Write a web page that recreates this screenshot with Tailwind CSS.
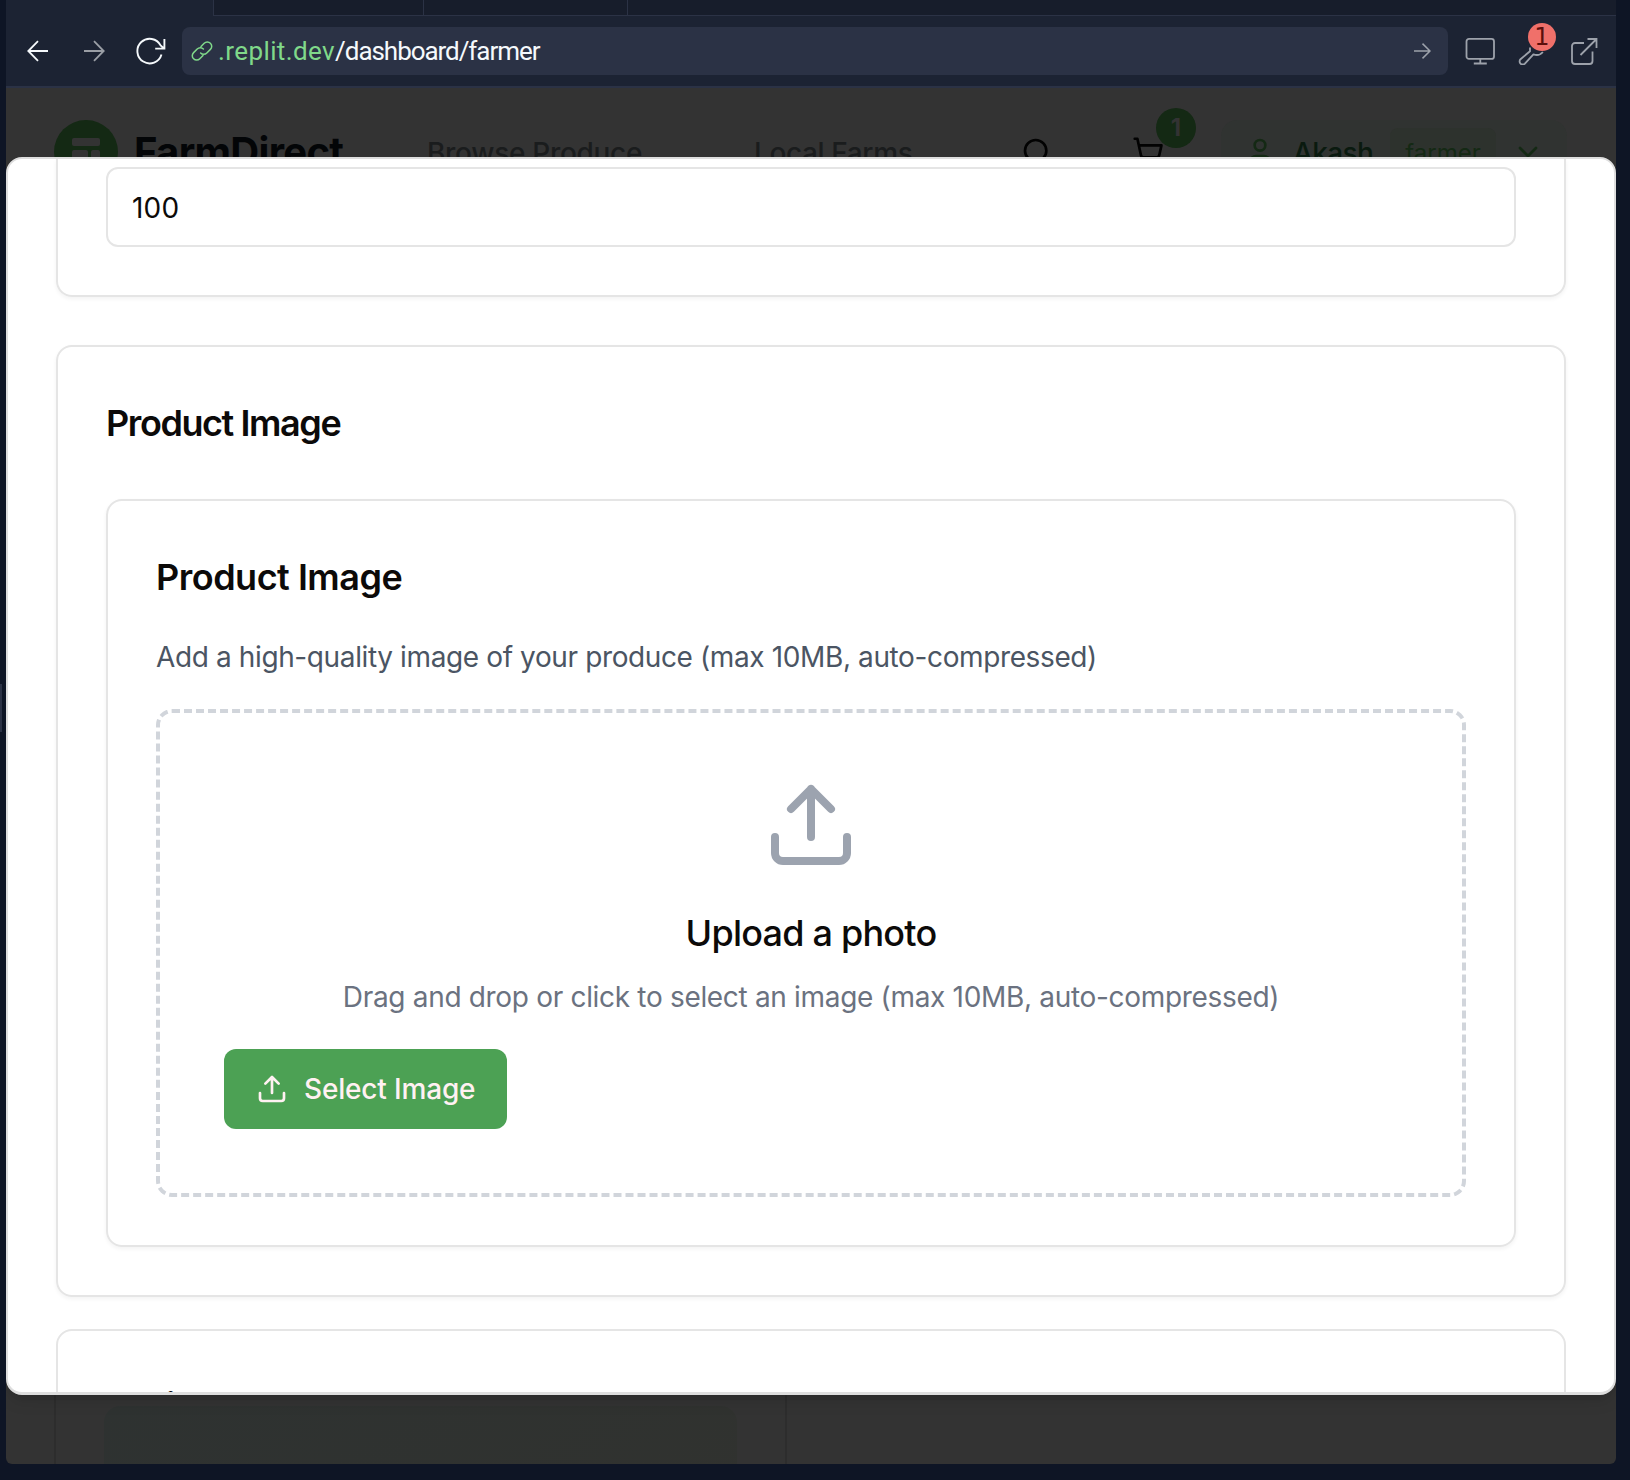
<!DOCTYPE html>
<html lang="en">
<head>
<meta charset="utf-8">
<title>FarmDirect</title>
<script src="https://cdn.jsdelivr.net/npm/@tailwindcss/browser@4"></script>
</head>
<body class="relative h-[1480px] w-[1630px] overflow-hidden bg-[#0e1525] pl-[6px] pr-[14px] font-['Inter',sans-serif] text-[28px] text-[#0c0a09]">
  <div class="absolute left-0 top-[684px] h-12 w-[2px] bg-[#2b3245]"></div>

  <!-- Tab strip -->
  <div class="flex h-4 bg-[#1c2333]">
    <div class="w-[207px]"></div>
    <div class="w-[210px] border-b border-l border-[#2b3245] bg-[#171d2b]"></div>
    <div class="w-[204px] border-b border-l border-[#2b3245] bg-[#171d2b]"></div>
    <div class="flex-1 border-b border-l border-[#2b3245] bg-[#171d2b]"></div>
  </div>

  <!-- Browser toolbar -->
  <div class="flex h-[72px] items-start border-b-2 border-[#2b3245] bg-[#1c2333] pt-[11px]">
    <div class="flex h-12 w-[176px] items-center">
      <svg class="ml-[21px] h-[22px] w-[22px]" viewBox="0 0 22 22" fill="none" stroke="#f5f9fc" stroke-width="1.8"><path d="M21 11H1.5M11 1.2 1.3 11l9.7 9.8"/></svg>
      <svg class="ml-[34px] h-[22px] w-[22px]" viewBox="0 0 22 22" fill="none" stroke="#9a9ea5" stroke-width="1.8"><path d="M1 11h19.5M11 1.2l9.7 9.8-9.7 9.8"/></svg>
      <svg class="ml-[31px] h-[28px] w-[30px]" viewBox="0 0 30 28" fill="none" stroke="#f5f9fc" stroke-width="1.9"><path d="M25.500 17.500A12.300 12.300 0 1 1 24.600 8.400L27.500 11M28.400 2v9.600h-9.200"/></svg>
    </div>
    <div class="flex h-12 w-[1266px] items-center rounded-lg bg-[#2b3245] pl-[9px] pr-[17px]">
      <svg class="h-[22px] w-[22px]" viewBox="0 0 22 22" fill="none" stroke="#80d98a" stroke-width="1.5" stroke-linecap="round"><path d="M10 6.500 13.200 3.200a4.300 4.300 0 0 1 6.200 0 4.300 4.300 0 0 1 0 6.200l-3.600 3.600a4.300 4.300 0 0 1-6.200 0M12 15.500l-3.200 3.300a4.300 4.300 0 0 1-6.200 0 4.300 4.300 0 0 1 0-6.200l3.600-3.600a4.300 4.300 0 0 1 6.200 0"/></svg>
      <div class="ml-[5px] flex-1 whitespace-nowrap pt-px font-['Roboto',sans-serif] text-[26px] tracking-[-1.05px] text-[#f5f9fc]"><span class="tracking-[0.4px] text-[#80d98a]">.replit.dev</span>/dashboard/farmer</div>
      <svg class="h-[16px] w-[17px]" viewBox="0 0 17 16" fill="none" stroke="#9da2ab" stroke-width="1.5"><path d="M0 8h16M8.5.6 16 8l-7.500 7.400"/></svg>
    </div>
    <div class="flex h-12 flex-1 items-center pl-[17px]">
      <svg class="h-[28px] w-[30px]" viewBox="0 0 30 28" fill="none" stroke="#9da2ab" stroke-width="1.8"><rect x="1.500" y="1.900" width="27.500" height="20" rx="2.500"/><path d="M15.300 22v4.500M8.800 26.500h13"/></svg>
      <div class="relative ml-[23px] h-[28px] w-[28px]">
        <svg class="h-[28px] w-[28px]" viewBox="0 0 28 28" fill="none" stroke="#9da2ab" stroke-width="1.8" stroke-linejoin="round"><path d="M12 10.500v3.700L2.500 22.200a3.100 3.100 0 0 0 4.400 4.400l8.500-9.300c3 1.200 7 .6 9.500-2.300"/></svg>
        <div class="absolute left-[10px] top-[-14px] flex h-[28px] w-[28px] items-center justify-center rounded-full bg-[#f0706a] font-['DejaVu_Sans',sans-serif] text-2xl text-[#5c0e0b]">1</div>
      </div>
      <svg class="ml-[24px] h-[28px] w-[28px]" viewBox="0 0 28 28" fill="none" stroke="#9da2ab" stroke-width="1.8"><path d="M14 6H5a3 3 0 0 0-3 3v15a3 3 0 0 0 3 3h14.500a3 3 0 0 0 3-3v-9.500M10.500 18 26 2.500M17.500 2h9v9"/></svg>
    </div>
  </div>

  <!-- App viewport, dimmed behind the dialog -->
  <div class="relative h-[1376px] overflow-hidden rounded-b-md bg-[#333333]">
    <div class="flex h-32 items-center pl-12">
      <div class="flex h-16 w-16 items-center justify-center rounded-full bg-[#142914]">
        <svg class="h-10 w-10" viewBox="0 0 40 40" fill="#333"><rect x="6" y="6" width="28" height="8" rx="2"/><path d="M8 18h12a2 2 0 0 1 2 2v14H8a2 2 0 0 1-2-2V20a2 2 0 0 1 2-2zM25 20a2 2 0 0 1 2-2h5a2 2 0 0 1 2 2v12a2 2 0 0 1-2 2h-5a2 2 0 0 1-2-2z"/></svg>
      </div>
      <div class="ml-4 w-[293px] whitespace-nowrap text-[40px] font-bold tracking-[-0.7px] text-[#030507]">FarmDirect</div>
      <div class="w-[327px] whitespace-nowrap pt-px font-medium tracking-[-0.3px] text-[#1a1c1d]">Browse Produce</div>
      <div class="w-[267px] whitespace-nowrap pt-px font-medium tracking-[-0.38px] text-[#1a1c1d]">Local Farms</div>
      <svg class="h-8 w-8" viewBox="0 0 24 24" fill="none" stroke="#020202" stroke-width="2" stroke-linecap="round"><circle cx="11" cy="11" r="8"/><path d="m21 21-4.300-4.300"/></svg>
      <div class="relative ml-[79px] h-8 w-8">
        <svg class="h-8 w-8" viewBox="0 0 24 24" fill="none" stroke="#020202" stroke-width="2" stroke-linecap="round" stroke-linejoin="round"><circle cx="8" cy="21" r="1"/><circle cx="19" cy="21" r="1"/><path d="M2.050 2.050h2l2.660 12.420a2 2 0 0 0 2 1.580h9.780a2 2 0 0 0 1.950-1.570l1.650-7.430H5.120"/></svg>
        <div class="absolute left-[24px] top-[-28px] flex h-10 w-10 items-center justify-center rounded-full bg-[#142914] text-2xl font-bold text-[#333]">1</div>
      </div>
      <div class="ml-[57px] flex h-16 w-[346px] items-center rounded-2xl bg-[#303331] pl-8">
        <svg class="-ml-[9px] h-8 w-8" viewBox="0 0 24 24" fill="none" stroke="#142914" stroke-width="2" stroke-linecap="round"><circle cx="12" cy="7" r="4"/><path d="M19 21v-2a4 4 0 0 0-4-4H9a4 4 0 0 0-4 4v2"/></svg>
        <div class="ml-[17px] w-[97px] pt-px font-medium tracking-[-0.6px] text-[#0a1a0f]">Akash</div>
        <div class="flex h-12 w-[106px] items-center justify-center rounded-lg bg-[#2d322d] pt-[2px] text-2xl text-[#142914]">farmer</div>
        <svg class="ml-[16px] h-8 w-8" viewBox="0 0 24 24" fill="none" stroke="#142914" stroke-width="2" stroke-linecap="round" stroke-linejoin="round"><path d="m6 9 6 6 6-6"/></svg>
      </div>
    </div>
    <div class="mt-[1040px] flex h-[208px] pl-12">
      <div class="w-[733px] border-x-2 border-[#2d2d2d] px-12 pt-[150px]">
        <div class="h-[384px] rounded-t-2xl bg-linear-to-br from-[#2e3231] to-[#32322e]"></div>
      </div>
    </div>

    <!-- Product dialog -->
    <div class="absolute inset-x-0 top-[69px] h-[1238px] overflow-hidden rounded-2xl border-2 border-b-3 border-[#dedede] bg-white px-12 shadow-lg">
      <div class="h-[138px] rounded-b-2xl border-x-2 border-b-2 border-[#e5e5e5] px-12 pt-2 shadow-[0_2px_4px_rgba(0,0,0,0.05)]">
        <div class="flex h-20 items-center rounded-xl border-2 border-[#e5e5e5] px-6 pt-[2px] tracking-[0.2px]">100</div>
      </div>

      <div class="mt-12 rounded-2xl border-2 border-[#e5e5e5] p-12 shadow-[0_2px_4px_rgba(0,0,0,0.05)]">
        <h3 class="text-[36px] font-semibold leading-[56px] tracking-[-1.42px]">Product Image</h3>
        <div class="mt-12 rounded-2xl border-2 border-[#e5e5e5] p-12 shadow-[0_2px_4px_rgba(0,0,0,0.05)]">
          <h3 class="text-[36px] font-semibold leading-[56px] tracking-[-0.5px]">Product Image</h3>
          <p class="mt-8 leading-10 tracking-[-0.38px] text-[#4b5563]">Add a high-quality image of your produce (max 10MB, auto-compressed)</p>
          <div class="mt-8 rounded-2xl border-4 border-dashed border-[#d1d5db] p-16">
            <svg class="mx-auto h-24 w-24" viewBox="0 0 24 24" fill="none" stroke="#9ca3af" stroke-width="2" stroke-linecap="round" stroke-linejoin="round"><path d="M21 15v4a2 2 0 0 1-2 2H5a2 2 0 0 1-2-2v-4M17 8l-5-5-5 5M12 3v12"/></svg>
            <h4 class="mt-8 text-center text-[36px] font-medium leading-[56px] tracking-[-0.78px]">Upload a photo</h4>
            <p class="mt-4 text-center leading-10 tracking-[-0.32px] text-[#6b7280]">Drag and drop or click to select an image (max 10MB, auto-compressed)</p>
            <button class="mt-8 flex h-20 w-[283px] items-center gap-4 whitespace-nowrap rounded-xl bg-[#4ca154] px-8 font-medium tracking-[-0.17px] text-[#fff1f2]">
              <svg class="h-8 w-8 shrink-0" viewBox="0 0 24 24" fill="none" stroke="currentColor" stroke-width="2" stroke-linecap="round" stroke-linejoin="round"><path d="M21 15v4a2 2 0 0 1-2 2H5a2 2 0 0 1-2-2v-4M17 8l-5-5-5 5M12 3v12"/></svg>
              Select Image
            </button>
          </div>
        </div>
      </div>

      <div class="mt-8 h-40 rounded-t-2xl border-2 border-[#e5e5e5] px-12 pt-[47px]">
        <h3 class="text-[36px] font-semibold leading-[56px] tracking-[-1.42px]">Basics</h3>
      </div>
    </div>
  </div>
</body>
</html>
